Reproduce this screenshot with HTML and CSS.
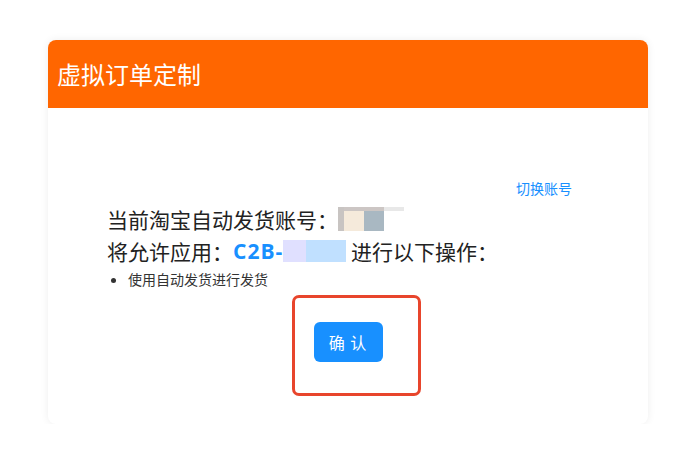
FILE: index.html
```html
<!DOCTYPE html>
<html lang="zh-CN">
<head>
  <meta charset="UTF-8">
  <title>虚拟订单定制</title>
  <meta name="viewport" content="width=device-width, initial-scale=1.0">
  <link rel="stylesheet" href="styles.css">
</head>
<body>
  <div class="card">
    <div class="card-header">
      <h2>虚拟订单定制</h2>
    </div>
    <div class="card-body">
      <div class="switch-row"><a class="switch-link">切换账号</a></div>
      <div class="info">
        <p class="info-line">当前淘宝自动发货账号：<span class="mask-account"><i class="m1"></i><i class="m2"></i><i class="m3"></i></span></p>
        <p class="info-line">将允许应用：<b class="app-name">C2B-</b><span class="mask-app"><i class="a1"></i><i class="a2"></i></span> 进行以下操作：</p>
        <ul class="perm-list">
          <li>使用自动发货进行发货</li>
        </ul>
      </div>
      <div class="actions">
        <div class="confirm-wrap">
          <button type="button" class="confirm-btn">确 认</button>
          <span class="mark-box"></span>
        </div>
      </div>
    </div>
  </div>
</body>
</html>
```

FILE: styles.css
```css
body { margin: 0; background: #fff; color: #222; font-family: "Noto Sans CJK SC", "Noto Sans", sans-serif; }
.card { width: 600px; height: 384px; margin: 40px 0 0 48px; background: #fff; border-radius: 8px; overflow: hidden; box-shadow: 0 0 8px rgba(0, 0, 0, 0.07); }
.card-header { height: 68px; background: #ff6600; display: flex; align-items: center; padding-left: 9px; }
.card-header h2 { margin: 0; color: #fff; font-size: 24px; font-weight: normal; line-height: 30px; }
.card-body { padding: 69px 76px 0 59px; }
.switch-row { text-align: right; height: 20px; line-height: 20px; }
.switch-link { font-size: 14px; color: #1890ff; cursor: pointer; }
.info { margin-top: 6px; }
.info-line { margin: 0; font-size: 21px; line-height: 32px; display: flex; align-items: center; white-space: pre; }
.app-name { color: #1890ff; font-family: "Open Sans", "Noto Sans", sans-serif; font-weight: 700; letter-spacing: 1px; }
.mask-account { display: inline-grid; grid-template-columns: 6px 20px 20px 20px; grid-template-rows: 4px 20px; margin-left: 0; }
.mask-account i { display: block; }
.mask-account .m1 { grid-row: 1 / 3; grid-column: 1; background: #c8c4c2; }
.mask-account .m2 { grid-column: 2 / 4; background: #ccc6c4; }
.mask-account .m3 { grid-column: 4; background: #e8e8e8; }
.mask-account::before { content: ""; grid-row: 2; grid-column: 2; background: #f5eadb; }
.mask-account::after { content: ""; grid-row: 2; grid-column: 3; background: #a9b8c2; }
.mask-app { display: inline-flex; height: 22px; }
.mask-app i { display: block; }
.mask-app .a1 { width: 23px; background: #e0e0ff; }
.mask-app .a2 { width: 40px; background: #c0e0ff; }
.perm-list { margin: 3px 0 0; padding-left: 21px; font-size: 14px; line-height: 18px; color: #333; }
.actions { display: flex; justify-content: center; margin: 34px -76px 0 -59px; }
.confirm-wrap { position: relative; }
.confirm-btn { width: 69px; height: 40px; border: none; border-radius: 6px; background: #1890ff; color: #fff; font-family: inherit; font-size: 16px; letter-spacing: 1px; cursor: pointer; }
.mark-box { position: absolute; left: -22px; top: -27px; width: 129px; height: 101px; box-sizing: border-box; border: 3px solid #e8452c; border-radius: 7px; pointer-events: none; }
```
